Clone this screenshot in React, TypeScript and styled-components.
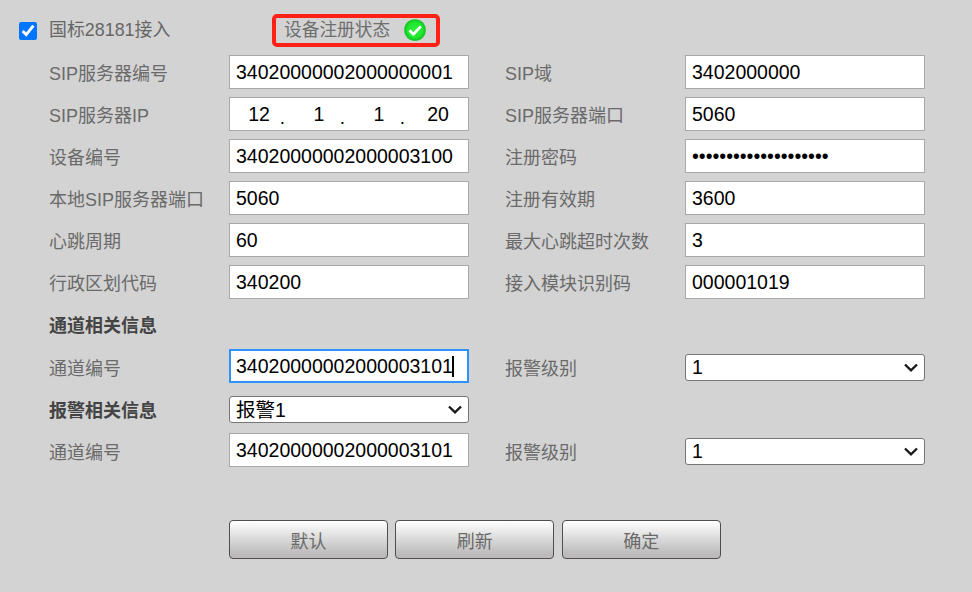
import React from "react";
import styled, { createGlobalStyle } from "styled-components";

const GlobalStyle = createGlobalStyle`
  html, body {
    margin: 0;
    padding: 0;
    background: #d3d3d3;
  }
  body {
    font-family: "Liberation Sans", "Noto Sans CJK SC", sans-serif;
  }
`;

const chevron =
  "data:image/svg+xml," +
  encodeURIComponent(
    '<svg xmlns="http://www.w3.org/2000/svg" width="14" height="9" viewBox="0 0 14 9"><path d="M1 1.5 7 7.3 13 1.5" fill="none" stroke="#1a1a1a" stroke-width="2.4"/></svg>'
  );

const Page = styled.div`
  width: 972px;
  height: 592px;
  overflow: hidden;
  box-sizing: border-box;
  padding: 14px 0 0 19px;
`;

const TopRow = styled.div`
  display: flex;
  align-items: center;
  height: 33px;
  margin-bottom: 8px;
`;

const Check = styled.input`
  width: 18px;
  height: 18px;
  margin: 0 12px 0 0;
  accent-color: #0075ff;
`;

const TopLabel = styled.label`
  width: 223px;
  padding-bottom: 5px;
  font-size: 17.9px;
  color: #666;
`;

const StatusBox = styled.div`
  box-sizing: border-box;
  width: 168px;
  height: 33px;
  border: 4px solid #ff2016;
  border-radius: 5px;
  display: flex;
  align-items: center;
  padding-left: 8px;
  gap: 14px;
  font-size: 17.7px;
  color: #6e6e6e;
`;

const StatusText = styled.span`
  padding-bottom: 5px;
`;

const Form = styled.div`
  display: flex;
  flex-direction: column;
  padding-left: 30px;
`;

const Row = styled.div<{ $height?: number; $gapAfter?: number }>`
  display: flex;
  align-items: center;
  height: ${(p) => p.$height ?? 34}px;
  margin-bottom: ${(p) => p.$gapAfter ?? 8}px;
`;

const Label = styled.div<{ $bold?: boolean; $shift?: number }>`
  width: 180px;
  flex: none;
  padding-top: ${(p) => ((p.$shift ?? 0) > 0 ? 2 : 0)}px;
  padding-bottom: ${(p) => ((p.$shift ?? 0) < 0 ? 2 : 0)}px;
  font-size: 18px;
  color: ${(p) => (p.$bold ? "#444" : "#6a6a6a")};
  font-weight: ${(p) => (p.$bold ? 700 : 400)};
`;

const Spacer = styled.div`
  width: 36px;
  flex: none;
`;

const FieldWrap = styled.div`
  position: relative;
  width: 240px;
  height: 34px;
  flex: none;
`;

const Input = styled.input<{ $focused?: boolean }>`
  box-sizing: border-box;
  display: block;
  width: 240px;
  height: 34px;
  flex: none;
  margin: 0;
  padding: 0 6px;
  background: #fff;
  color: #000;
  font-family: "Liberation Sans", sans-serif;
  font-size: 19.5px;
  border: ${(p) => (p.$focused ? "1px solid #2e93f8" : "1px solid #a9a9a9")};
  box-shadow: ${(p) => (p.$focused ? "0 0 0 1px #2e93f8 inset" : "none")};
  outline: none;
  border-radius: 0;
`;

const Caret = styled.span`
  position: absolute;
  left: 223px;
  top: 7px;
  width: 2px;
  height: 21px;
  background: #000;
`;

const IpBox = styled.div`
  box-sizing: border-box;
  width: 240px;
  height: 34px;
  flex: none;
  background: #fff;
  border: 1px solid #a9a9a9;
  display: grid;
  grid-template-columns: 60px 60px 60px 58px;
  align-items: center;
  font-size: 19.5px;
  color: #000;
`;

const IpPart = styled.div`
  position: relative;
  text-align: center;
  padding-right: 2px;
`;

const IpDot = styled.span`
  position: absolute;
  right: 5px;
  top: 4px;
  font-size: 19px;
`;

const Select = styled.select<{ $nudge?: boolean }>`
  box-sizing: border-box;
  width: 240px;
  height: 27px;
  flex: none;
  margin: ${(p) => (p.$nudge ? "2px 0 0" : "0")};
  padding: 0 6px;
  appearance: none;
  background: #fff url("${chevron}") no-repeat right 6px center;
  color: #000;
  font-family: "Liberation Sans", "Noto Sans CJK SC", sans-serif;
  font-size: 19.5px;
  border: 1px solid #767676;
  border-radius: 3px;
`;

const Buttons = styled.div`
  display: flex;
  margin: 45px 0 0 180px;
  gap: 7.5px;
`;

const Button = styled.button`
  box-sizing: border-box;
  width: 158.9px;
  height: 39px;
  padding: 0;
  border: 1px solid #4e4e4e;
  border-radius: 4px;
  background: linear-gradient(to bottom, #fff 0%, #e4e4e4 35%, #bcbaba 90%, #bcbaba 100%);
  color: #6a6a6a;
  font-family: "Liberation Sans", "Noto Sans CJK SC", sans-serif;
  font-size: 18px;
`;

const OkSvg = styled.svg`
  flex: none;
  margin-bottom: 2px;
`;

const OkIcon = () => (
  <OkSvg width="22" height="22" viewBox="0 0 22 22">
    <defs>
      <radialGradient id="okFill">
        <stop offset="0%" stopColor="#2cf23c" />
        <stop offset="70%" stopColor="#1fe62e" />
        <stop offset="100%" stopColor="#0fc01e" />
      </radialGradient>
    </defs>
    <circle cx="11" cy="11" r="10.8" fill="url(#okFill)" />
    <path d="M5.4 11.2 9.4 15.2 16.8 7.4" fill="none" stroke="#fff" strokeWidth="2.8" />
  </OkSvg>
);

const IpField = ({ parts }: { parts: string[] }) => (
  <IpBox>
    {parts.map((part, i) => (
      <IpPart key={i}>
        {part}
        {i < parts.length - 1 && <IpDot>.</IpDot>}
      </IpPart>
    ))}
  </IpBox>
);

const Field = ({ value, type }: { value: string; type?: string }) => (
  <Input type={type ?? "text"} defaultValue={value} />
);

const Level = () => (
  <Select $nudge defaultValue="1">
    <option value="1">1</option>
    <option value="2">2</option>
  </Select>
);

export default function App() {
  return (
    <Page>
      <GlobalStyle />
      <TopRow>
        <Check type="checkbox" defaultChecked />
        <TopLabel>国标28181接入</TopLabel>
        <StatusBox>
          <StatusText>设备注册状态</StatusText>
          <OkIcon />
        </StatusBox>
      </TopRow>
      <Form>
        <Row>
          <Label>SIP服务器编号</Label>
          <Field value="34020000002000000001" />
          <Spacer />
          <Label>SIP域</Label>
          <Field value="3402000000" />
        </Row>
        <Row>
          <Label>SIP服务器IP</Label>
          <IpField parts={["12", "1", "1", "20"]} />
          <Spacer />
          <Label>SIP服务器端口</Label>
          <Field value="5060" />
        </Row>
        <Row>
          <Label>设备编号</Label>
          <Field value="34020000002000003100" />
          <Spacer />
          <Label>注册密码</Label>
          <Field type="password" value="12345678901234567890" />
        </Row>
        <Row>
          <Label>本地SIP服务器端口</Label>
          <Field value="5060" />
          <Spacer />
          <Label>注册有效期</Label>
          <Field value="3600" />
        </Row>
        <Row>
          <Label>心跳周期</Label>
          <Field value="60" />
          <Spacer />
          <Label>最大心跳超时次数</Label>
          <Field value="3" />
        </Row>
        <Row $gapAfter={11}>
          <Label>行政区划代码</Label>
          <Field value="340200" />
          <Spacer />
          <Label>接入模块识别码</Label>
          <Field value="000001019" />
        </Row>
        <Row $height={28} $gapAfter={11}>
          <Label $bold>通道相关信息</Label>
        </Row>
        <Row $gapAfter={13}>
          <Label $shift={1}>通道编号</Label>
          <FieldWrap>
            <Input $focused defaultValue="34020000002000003101" />
            <Caret />
          </FieldWrap>
          <Spacer />
          <Label $shift={1}>报警级别</Label>
          <Level />
        </Row>
        <Row $height={27} $gapAfter={10}>
          <Label $bold $shift={-1}>报警相关信息</Label>
          <Select defaultValue="1">
            <option value="1">报警1</option>
          </Select>
        </Row>
        <Row>
          <Label $shift={1}>通道编号</Label>
          <Field value="34020000002000003101" />
          <Spacer />
          <Label $shift={1}>报警级别</Label>
          <Level />
        </Row>
        <Buttons>
          <Button>默认</Button>
          <Button>刷新</Button>
          <Button>确定</Button>
        </Buttons>
      </Form>
    </Page>
  );
}
